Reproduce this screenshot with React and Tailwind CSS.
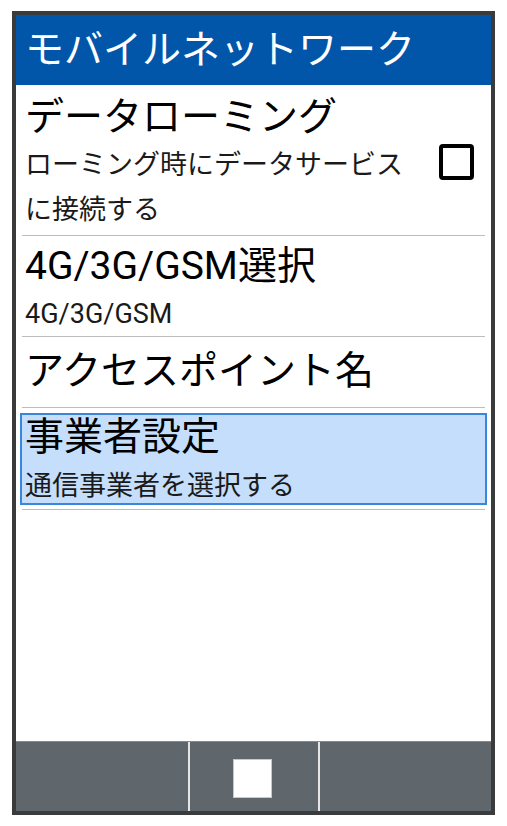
import React from "react";

const FONT = { fontFamily: 'Roboto, "Noto Sans CJK JP", sans-serif' };

export default function App() {
  return (
    <div className="w-[507px] h-[826px] bg-white" style={FONT}>
      <div className="ml-[12px] pt-[11px]">
        <div className="w-[483px] h-[804px] border-4 border-[#3a3b3c] flex flex-col bg-white">
          <div className="h-[70px] bg-[#0256aa] flex items-center pl-[9px]">
            <span className="text-white text-[39px] leading-[48px]">モバイルネットワーク</span>
          </div>

          <div className="flex-1 flex flex-col">
            {/* Row 1 */}
            <div className="mx-[6px] border-b border-[#bdbdbd] pt-[8px] pb-[2px] flex items-center">
              <div className="flex-1 pl-[3px]">
                <div className="text-[39px] leading-[48px] text-black">データローミング</div>
                <div className="mt-[2px] text-[27px] leading-[45px] text-[#1a1a1a]">
                  ローミング時にデータサービス
                  <br />
                  に接続する
                </div>
              </div>
              <div className="mr-[11px] w-[35px] h-[36px] border-4 border-black rounded-[4px] mb-[2px]" />
            </div>

            {/* Row 2 */}
            <div className="mx-[6px] border-b border-[#bdbdbd] pt-[6px] pb-[2px] pl-[3px]">
              <div className="text-[39px] leading-[48px] text-black">4G/3G/GSM選択</div>
              <div className="mt-[4px] text-[27px] leading-[40px] text-[#1a1a1a]">4G/3G/GSM</div>
            </div>

            {/* Row 3 */}
            <div className="mx-[6px] border-b border-[#bdbdbd] pt-[10px] pb-[12px] pl-[3px]">
              <div className="text-[39px] leading-[48px] text-black">アクセスポイント名</div>
            </div>

            {/* Row 4 selected */}
            <div className="mx-[6px] border-b border-[#bdbdbd] pt-[5px] pb-[4px]">
              <div className="-mx-[2px] border-2 border-[#3a86dc] bg-[#c4defb] pl-[3px]">
                <div className="text-[39px] leading-[44px] text-black">事業者設定</div>
                <div className="mt-[10px] text-[27px] leading-[34px] text-[#1a1a1a]">通信事業者を選択する</div>
              </div>
            </div>

            <div className="flex-1" />
          </div>

          <div className="h-[70px] bg-[#5f676d] border-t border-[#848b91] flex">
            <div className="w-[172px]" />
            <div className="w-[2px] bg-[#e6e6e6]" />
            <div className="w-[128px] flex pl-[43px] pt-[17px]">
              <div className="w-[39px] h-[39px] bg-white border border-[#c8c8c8]" />
            </div>
            <div className="w-[2px] bg-[#e6e6e6]" />
            <div className="flex-1" />
          </div>
        </div>
      </div>
    </div>
  );
}
